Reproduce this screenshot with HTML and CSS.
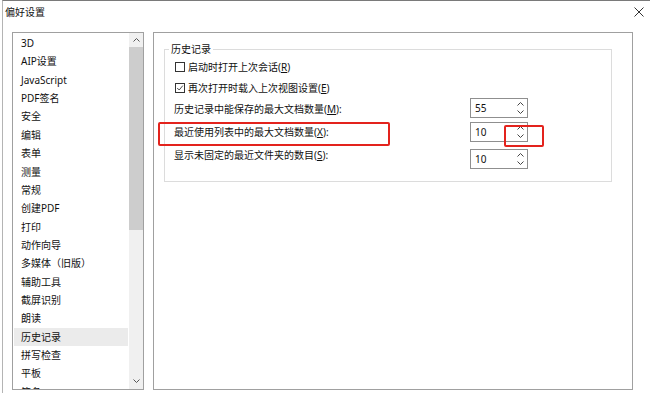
FILE: index.html
```html
<!DOCTYPE html>
<html lang="zh-CN">
<head>
	<meta charset="UTF-8">
	<title>偏好设置</title>
	<link rel="stylesheet" href="styles.css">
</head>
<body>
	<div class="window">
		<div class="titlebar">
			<span class="title">偏好设置</span>
			<svg class="close" viewBox="0 0 10 10"><path d="M0.5 0.5L9.5 9.5M9.5 0.5L0.5 9.5" stroke="#333" stroke-width="1" fill="none"/></svg>
		</div>
		<div class="main">
			<div class="list">
				<ul class="items">
					<li>3D</li>
					<li>AIP设置</li>
					<li>JavaScript</li>
					<li>PDF签名</li>
					<li>安全</li>
					<li>编辑</li>
					<li>表单</li>
					<li>测量</li>
					<li>常规</li>
					<li>创建PDF</li>
					<li>打印</li>
					<li>动作向导</li>
					<li>多媒体（旧版）</li>
					<li>辅助工具</li>
					<li>截屏识别</li>
					<li>朗读</li>
					<li class="active">历史记录</li>
					<li>拼写检查</li>
					<li>平板</li>
					<li>签名</li>
				</ul>
				<div class="scrollbar">
					<div class="sb-arrow"><svg viewBox="0 0 7 4"><path d="M0.5 3.5L3.5 0.5L6.5 3.5" stroke="#555" fill="none"/></svg></div>
					<div class="sb-thumb"></div>
					<div class="sb-track"></div>
					<div class="sb-arrow down"><svg viewBox="0 0 7 4"><path d="M0.5 0.5L3.5 3.5L6.5 0.5" stroke="#555" fill="none"/></svg></div>
				</div>
			</div>
			<div class="panel">
				<fieldset class="group">
					<legend>历史记录</legend>
					<label class="check"><span class="box"></span>启动时打开上次会话(<u>R</u>)</label>
					<label class="check"><span class="box checked"><svg viewBox="0 0 10 10"><path d="M1.5 5L4 7.5L8.5 2" stroke="#222" fill="none"/></svg></span>再次打开时载入上次视图设置(<u>E</u>)</label>
					<div class="field">
						<span>历史记录中能保存的最大文档数量(<u>M</u>):</span>
						<div class="spin">
							<span class="spin-value">55</span>
							<span class="spin-btns">
								<svg viewBox="0 0 7 4"><path d="M0.5 3.5L3.5 0.5L6.5 3.5" stroke="#444" fill="none"/></svg>
								<svg viewBox="0 0 7 4"><path d="M0.5 0.5L3.5 3.5L6.5 0.5" stroke="#444" fill="none"/></svg>
							</span>
						</div>
					</div>
					<div class="field f2">
						<span>最近使用列表中的最大文档数量(<u>X</u>):</span>
						<div class="spin">
							<span class="spin-value">10</span>
							<span class="spin-btns">
								<svg viewBox="0 0 7 4"><path d="M0.5 3.5L3.5 0.5L6.5 3.5" stroke="#444" fill="none"/></svg>
								<svg viewBox="0 0 7 4"><path d="M0.5 0.5L3.5 3.5L6.5 0.5" stroke="#444" fill="none"/></svg>
							</span>
						</div>
					</div>
					<div class="field f3">
						<span>显示未固定的最近文件夹的数目(<u>S</u>):</span>
						<div class="spin">
							<span class="spin-value">10</span>
							<span class="spin-btns">
								<svg viewBox="0 0 7 4"><path d="M0.5 3.5L3.5 0.5L6.5 3.5" stroke="#444" fill="none"/></svg>
								<svg viewBox="0 0 7 4"><path d="M0.5 0.5L3.5 3.5L6.5 0.5" stroke="#444" fill="none"/></svg>
							</span>
						</div>
					</div>
				</fieldset>
				<div class="mark mark-row"></div>
				<div class="mark mark-spin"></div>
			</div>
		</div>
	</div>
</body>
</html>
```

FILE: styles.css
```css
html, body {
	margin: 0;
	padding: 0;
	background: #fff;
}
body {
	font-family: "Noto Sans", "Noto Sans CJK SC", sans-serif;
	font-size: 10px;
	color: #111;
}
.window {
	margin-left: 2px;
	height: 393px;
	box-sizing: border-box;
	border-left: 1px solid #b4b4b4;
	border-top: 1px solid #7a7a7a;
	overflow: hidden;
}
.titlebar {
	height: 21px;
	display: flex;
	align-items: center;
	justify-content: space-between;
	padding: 0 6px 0 2px;
}
.close {
	width: 10px;
	height: 10px;
	margin-top: 1px;
}
.main {
	display: flex;
	gap: 9px;
	padding: 10px 0 0 9px;
}
.list {
	width: 132px;
	height: 358px;
	box-sizing: border-box;
	border: 1px solid #a0a0a0;
	display: flex;
	overflow: hidden;
}
.items {
	list-style: none;
	margin: 0;
	padding: 1px 0 0;
	flex: 1;
	overflow: hidden;
}
.items li {
	height: 18.37px;
	line-height: 18.37px;
	padding-left: 7px;
	margin: 0 1px;
	white-space: nowrap;
}
.items li.active {
	background: #ebebeb;
}
.scrollbar {
	width: 14px;
	display: flex;
	flex-direction: column;
	background: #f0f0f0;
}
.sb-arrow {
	height: 14px;
	display: flex;
	align-items: center;
	justify-content: center;
}
.sb-arrow.down {
	height: 16px;
}
.sb-arrow svg {
	width: 7px;
	height: 4px;
}
.sb-thumb {
	height: 183px;
	background: #cdcdcd;
}
.sb-track {
	flex: 1;
}
.panel {
	position: relative;
	width: 480px;
	height: 358px;
	box-sizing: border-box;
	border: 1px solid #a0a0a0;
}
.group {
	margin: 9px 0 0 10px;
	width: 448px;
	height: 140px;
	box-sizing: border-box;
	border: 1px solid #dcdcdc;
	padding: 0 0 0 9px;
	min-width: 0;
}
.group legend {
	padding: 0 2px;
	margin-left: -5px;
	line-height: 14px;
}
.check {
	display: flex;
	align-items: center;
	height: 21px;
}
.box {
	width: 10px;
	height: 10px;
	box-sizing: border-box;
	border: 1px solid #333;
	margin: 0 3px 0 1px;
	display: flex;
}
.box svg {
	width: 8px;
	height: 8px;
}
.field {
	display: grid;
	grid-template-columns: 296px 58px;
	align-items: start;
	height: 23px;
}
.field > span {
	line-height: 23px;
	white-space: nowrap;
}
.field.f2 .spin {
	margin-top: 1px;
}
.field.f3 .spin {
	margin-top: 5px;
}
.spin {
	display: flex;
	height: 20px;
	box-sizing: border-box;
	border: 1px solid #8f8f8f;
}
.spin-value {
	flex: 1;
	padding-left: 4px;
	line-height: 18px;
}
.spin-btns {
	width: 14px;
	display: flex;
	flex-direction: column;
	align-items: center;
	justify-content: space-around;
	padding: 1px 0;
}
.spin-btns svg {
	width: 7px;
	height: 4px;
}
.mark {
	position: absolute;
	box-sizing: border-box;
	border: 2px solid #e3231d;
	border-radius: 2px;
}
.mark-row {
	left: 4px;
	top: 89px;
	width: 232px;
	height: 24px;
}
.mark-spin {
	left: 350px;
	top: 92px;
	width: 40px;
	height: 22px;
}
```
